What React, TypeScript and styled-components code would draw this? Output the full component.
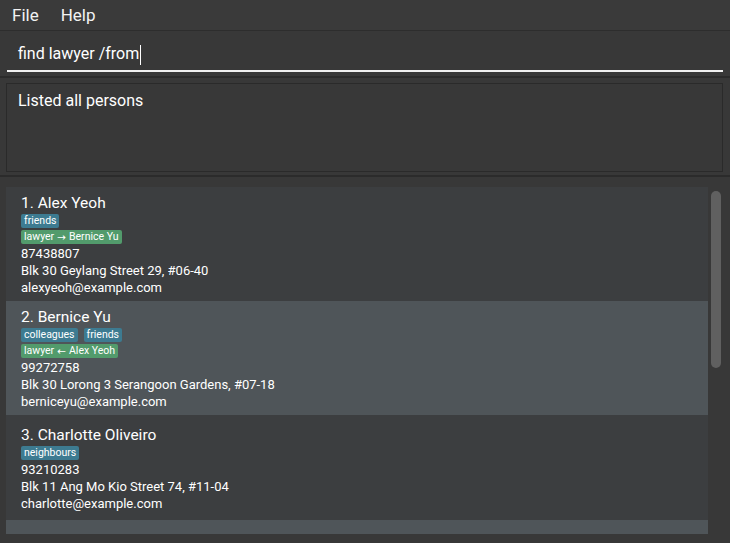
import React from "react";
import styled, { createGlobalStyle } from "styled-components";

const Global = createGlobalStyle`
  html, body { margin: 0; padding: 0; background: #383838; }
  body { font-family: Roboto, "Open Sans", "Liberation Sans", sans-serif; color: #ffffff; }
  * { box-sizing: border-box; }
`;

const Page = styled.div`
  width: 730px;
  height: 543px;
  display: flex;
  flex-direction: column;
  background: #383838;
  overflow: hidden;
`;

const MenuBar = styled.div`
  height: 31px;
  display: flex;
  align-items: center;
  gap: 22px;
  padding: 0 0 0 12px;
  background: #3a3a3a;
  border-bottom: 1px solid #2d2d2d;
  font-size: 17px;
  color: #f2f2f2;
`;

const MenuItem = styled.span`
  line-height: 30px;
`;

const CommandSection = styled.div`
  height: 47px;
  padding: 10px 7px 0 7px;
  border-bottom: 2px solid #2b2b2b;
`;

const CommandField = styled.div`
  height: 31px;
  border-bottom: 2px solid #f0f0f0;
  padding: 0 0 0 11px;
  font-size: 16px;
  line-height: 26px;
  color: #ffffff;
  display: flex;
  align-items: flex-start;
`;

const Caret = styled.span`
  display: inline-block;
  width: 1px;
  height: 20px;
  margin-top: 4px;
  margin-left: 1px;
  background: #ffffff;
`;

const ResultSection = styled.div`
  height: 99px;
  padding: 5px 7px 5px 6px;
  border-bottom: 2px solid #2b2b2b;
`;

const ResultBox = styled.div`
  height: 89px;
  border: 1px solid #2a2a2a;
  padding: 6px 11px;
  font-size: 16px;
  line-height: 22px;
  color: #ffffff;
`;

const ListSection = styled.div`
  flex: 1;
  display: flex;
  padding: 10px 9px 9px 6px;
  gap: 3px;
  min-height: 0;
`;

const List = styled.div`
  flex: 1;
  display: flex;
  flex-direction: column;
  overflow: hidden;
`;

const ScrollTrack = styled.div`
  width: 10px;
  padding-top: 4px;
`;

const Thumb = styled.div`
  width: 10px;
  height: 177px;
  border-radius: 5px;
  background: #606060;
`;

const Card = styled.div<{ $alt: boolean }>`
  flex: 0 0 auto;
  min-height: 105px;
  padding: 6px 15px 5px 15px;
  display: flex;
  flex-direction: column;
  justify-content: center;
  background: ${(p) => (p.$alt ? "#4f5559" : "#3c3e40")};
`;

const Name = styled.div`
  font-size: 15.5px;
  line-height: 20px;
  color: #ffffff;
`;

const TagRow = styled.div`
  display: flex;
  gap: 6px;
  height: 14px;
  margin: 1px 0 1px 0;
`;

const Tag = styled.span<{ $kind: "tag" | "link" }>`
  display: flex;
  align-items: center;
  gap: 3px;
  height: 14px;
  font-size: 10.5px;
  line-height: 14px;
  padding: 0 3px;
  border-radius: 2px;
  color: #ffffff;
  background: ${(p) => (p.$kind === "tag" ? "#3d7b91" : "#529b6c")};
`;

const Arrow = styled.span`
  font-family: "DejaVu Sans", sans-serif;
  font-size: 10.5px;
  line-height: 1;
`;

const Line = styled.div`
  font-size: 13px;
  line-height: 17px;
  color: #ffffff;
`;

type Person = {
  name: string;
  tags: string[];
  link?: { arrow: string; target: string };
  phone: string;
  address: string;
  email: string;
};

const people: Person[] = [
  {
    name: "Alex Yeoh",
    tags: ["friends"],
    link: { arrow: "\u2192", target: "Bernice Yu" },
    phone: "87438807",
    address: "Blk 30 Geylang Street 29, #06-40",
    email: "alexyeoh@example.com",
  },
  {
    name: "Bernice Yu",
    tags: ["colleagues", "friends"],
    link: { arrow: "\u2190", target: "Alex Yeoh" },
    phone: "99272758",
    address: "Blk 30 Lorong 3 Serangoon Gardens, #07-18",
    email: "berniceyu@example.com",
  },
  {
    name: "Charlotte Oliveiro",
    tags: ["neighbours"],
    phone: "93210283",
    address: "Blk 11 Ang Mo Kio Street 74, #11-04",
    email: "charlotte@example.com",
  },
  {
    name: "David Li",
    tags: ["family"],
    phone: "91031282",
    address: "Blk 436 Serangoon Gardens Street 26, #16-43",
    email: "lidavid@example.com",
  },
];

export default function App() {
  return (
    <Page>
      <Global />
      <MenuBar>
        <MenuItem>File</MenuItem>
        <MenuItem>Help</MenuItem>
      </MenuBar>
      <CommandSection>
        <CommandField>
          find lawyer /from
          <Caret />
        </CommandField>
      </CommandSection>
      <ResultSection>
        <ResultBox>Listed all persons</ResultBox>
      </ResultSection>
      <ListSection>
        <List>
          {people.map((p, i) => (
            <Card key={p.name} $alt={i % 2 === 1}>
              <Name>
                {i + 1}. {p.name}
              </Name>
              <TagRow>
                {p.tags.map((t) => (
                  <Tag key={t} $kind="tag">
                    {t}
                  </Tag>
                ))}
              </TagRow>
              {p.link && (
                <TagRow>
                  <Tag $kind="link">
                    <span>lawyer</span>
                    <Arrow>{p.link.arrow}</Arrow>
                    <span>{p.link.target}</span>
                  </Tag>
                </TagRow>
              )}
              <Line>{p.phone}</Line>
              <Line>{p.address}</Line>
              <Line>{p.email}</Line>
            </Card>
          ))}
        </List>
        <ScrollTrack>
          <Thumb />
        </ScrollTrack>
      </ListSection>
    </Page>
  );
}
